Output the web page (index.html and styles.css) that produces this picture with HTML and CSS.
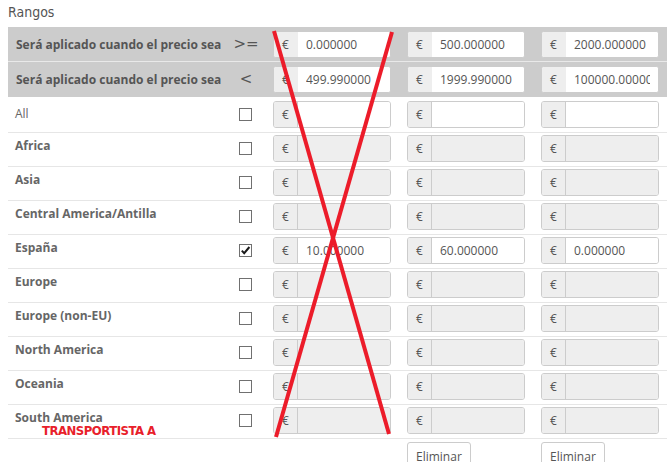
FILE: index.html
```html
<!DOCTYPE html>
<html lang="es">
<head>
<meta charset="utf-8">
<title>Rangos</title>
<link rel="stylesheet" href="styles.css">
</head>
<body>
<div class="page">
  <div class="title">Rangos</div>
  <div class="table">
    <div class="row head first">
      <div class="label">Será aplicado cuando el precio sea</div>
      <div class="op sym">&gt;=</div>
      <div class="price"><div class="ig"><span class="addon">€</span><input class="fi" value="0.000000"></div></div>
      <div class="price"><div class="ig"><span class="addon">€</span><input class="fi" value="500.000000"></div></div>
      <div class="price"><div class="ig"><span class="addon">€</span><input class="fi" value="2000.000000"></div></div>
    </div>
    <div class="row head second">
      <div class="label">Será aplicado cuando el precio sea</div>
      <div class="op sym">&lt;</div>
      <div class="price"><div class="ig"><span class="addon">€</span><input class="fi" value="499.990000"></div></div>
      <div class="price"><div class="ig"><span class="addon">€</span><input class="fi" value="1999.990000"></div></div>
      <div class="price"><div class="ig"><span class="addon">€</span><input class="fi" value="100000.000000"></div></div>
    </div>

    <div class="row body all">
      <div class="label plain">All</div>
      <div class="op"><span class="cb"></span></div>
      <div class="price"><div class="ig"><span class="addon">€</span><input class="fi"></div></div>
      <div class="price"><div class="ig"><span class="addon">€</span><input class="fi"></div></div>
      <div class="price"><div class="ig"><span class="addon">€</span><input class="fi"></div></div>
    </div>
    <div class="row body">
      <div class="label">Africa</div>
      <div class="op"><span class="cb"></span></div>
      <div class="price"><div class="ig off"><span class="addon">€</span><input class="fi" disabled></div></div>
      <div class="price"><div class="ig off"><span class="addon">€</span><input class="fi" disabled></div></div>
      <div class="price"><div class="ig off"><span class="addon">€</span><input class="fi" disabled></div></div>
    </div>
    <div class="row body">
      <div class="label">Asia</div>
      <div class="op"><span class="cb"></span></div>
      <div class="price"><div class="ig off"><span class="addon">€</span><input class="fi" disabled></div></div>
      <div class="price"><div class="ig off"><span class="addon">€</span><input class="fi" disabled></div></div>
      <div class="price"><div class="ig off"><span class="addon">€</span><input class="fi" disabled></div></div>
    </div>
    <div class="row body">
      <div class="label">Central America/Antilla</div>
      <div class="op"><span class="cb"></span></div>
      <div class="price"><div class="ig off"><span class="addon">€</span><input class="fi" disabled></div></div>
      <div class="price"><div class="ig off"><span class="addon">€</span><input class="fi" disabled></div></div>
      <div class="price"><div class="ig off"><span class="addon">€</span><input class="fi" disabled></div></div>
    </div>
    <div class="row body">
      <div class="label">España</div>
      <div class="op"><span class="cb checked"><svg width="11" height="11" viewBox="0 0 11 11"><polyline points="1.8,5.6 4.2,8.2 9.4,2" fill="none" stroke="#1a1a1a" stroke-width="2"/></svg></span></div>
      <div class="price"><div class="ig"><span class="addon">€</span><input class="fi" value="10.000000"></div></div>
      <div class="price"><div class="ig"><span class="addon">€</span><input class="fi" value="60.000000"></div></div>
      <div class="price"><div class="ig"><span class="addon">€</span><input class="fi" value="0.000000"></div></div>
    </div>
    <div class="row body">
      <div class="label">Europe</div>
      <div class="op"><span class="cb"></span></div>
      <div class="price"><div class="ig off"><span class="addon">€</span><input class="fi" disabled></div></div>
      <div class="price"><div class="ig off"><span class="addon">€</span><input class="fi" disabled></div></div>
      <div class="price"><div class="ig off"><span class="addon">€</span><input class="fi" disabled></div></div>
    </div>
    <div class="row body">
      <div class="label">Europe (non-EU)</div>
      <div class="op"><span class="cb"></span></div>
      <div class="price"><div class="ig off"><span class="addon">€</span><input class="fi" disabled></div></div>
      <div class="price"><div class="ig off"><span class="addon">€</span><input class="fi" disabled></div></div>
      <div class="price"><div class="ig off"><span class="addon">€</span><input class="fi" disabled></div></div>
    </div>
    <div class="row body">
      <div class="label">North America</div>
      <div class="op"><span class="cb"></span></div>
      <div class="price"><div class="ig off"><span class="addon">€</span><input class="fi" disabled></div></div>
      <div class="price"><div class="ig off"><span class="addon">€</span><input class="fi" disabled></div></div>
      <div class="price"><div class="ig off"><span class="addon">€</span><input class="fi" disabled></div></div>
    </div>
    <div class="row body">
      <div class="label">Oceania</div>
      <div class="op"><span class="cb"></span></div>
      <div class="price"><div class="ig off"><span class="addon">€</span><input class="fi" disabled></div></div>
      <div class="price"><div class="ig off"><span class="addon">€</span><input class="fi" disabled></div></div>
      <div class="price"><div class="ig off"><span class="addon">€</span><input class="fi" disabled></div></div>
    </div>
    <div class="row body">
      <div class="label">South America</div>
      <div class="op"><span class="cb"></span></div>
      <div class="price"><div class="ig off"><span class="addon">€</span><input class="fi" disabled></div></div>
      <div class="price"><div class="ig off"><span class="addon">€</span><input class="fi" disabled></div></div>
      <div class="price"><div class="ig off"><span class="addon">€</span><input class="fi" disabled></div></div>
    </div>
    <div class="row actions">
      <div></div>
      <div></div>
      <div class="price"></div>
      <div class="price"><button class="btn">Eliminar</button></div>
      <div class="price"><button class="btn">Eliminar</button></div>
    </div>
  </div>

  <div class="note">TRANSPORTISTA A</div>
  <svg class="cross" width="670" height="462" viewBox="0 0 670 462">
    <line x1="274" y1="31" x2="389" y2="434" stroke="#ec1c2a" stroke-width="4"/>
    <line x1="392" y1="32" x2="276" y2="437" stroke="#ec1c2a" stroke-width="4"/>
  </svg>
</div>
</body>
</html>
```

FILE: styles.css
```css
* { box-sizing: border-box; }

html, body {
  margin: 0;
  padding: 0;
  background: #fff;
}

body {
  font-family: "Open Sans", "Liberation Sans", sans-serif;
  font-size: 12px;
  color: #555;
  overflow: hidden;
}

.page {
  position: relative;
  width: 670px;
  height: 462px;
  padding: 0 8px;
}

.title {
  font-family: "Liberation Sans Narrow", "DejaVu Sans Condensed", sans-serif;
  font-size: 14px;
  color: #555;
  height: 27px;
  line-height: 22px;
  padding-top: 1px;
}

.table {
  width: 659px;
}

.row {
  display: grid;
  grid-template-columns: 225px 32px 134px 134px 134px;
  align-items: center;
}

.head {
  background: #cccccc;
}

.head.first {
  height: 35px;
  border-bottom: 1px solid #e9e9e9;
}

.head.second {
  height: 35px;
}

.head .label {
  font-weight: 700;
  padding-left: 8px;
  color: #555;
}

.op {
  display: flex;
  justify-content: center;
  padding-right: 7px;
  line-height: 1;
  color: #555;
}

.op.sym {
  font-family: "DejaVu Sans", sans-serif;
  font-size: 15px;
  padding-right: 6px;
}

.body {
  height: 34px;
  border-bottom: 1px solid #e6e6e6;
  padding-bottom: 2px;
}

.body.all {
  height: 36px;
  padding-bottom: 0;
}

.body .label {
  align-self: start;
  padding-left: 7px;
  padding-top: 4px;
  font-weight: 700;
  color: #666;
  line-height: 17px;
}

.body .label.plain {
  font-weight: 400;
  padding-top: 8px;
}

.price {
  padding: 0 8px;
}

.ig {
  display: flex;
  height: 27px;
  border: 1px solid #ccc;
  border-radius: 3px;
  overflow: hidden;
  background: #fff;
}

.addon {
  width: 24px;
  flex: none;
  display: flex;
  align-items: center;
  justify-content: center;
  background: #eeeeee;
  border-right: 1px solid #ccc;
  color: #555;
  font-size: 12px;
}

.head .addon {
  border-right-color: #eee;
}

.fi {
  flex: 1;
  min-width: 0;
  border: 0;
  padding: 0 8px;
  margin: 0;
  font-family: inherit;
  font-size: 12px;
  color: #555;
  background: #fff;
  outline: none;
}

.ig.off .fi {
  background: #eeeeee;
}

.cb {
  display: block;
  width: 13px;
  height: 13px;
  border: 1px solid #707070;
  background: #fff;
}

.cb svg {
  display: block;
}

.actions {
  padding-top: 3px;
  align-items: start;
}

.btn {
  font-family: inherit;
  font-size: 12px;
  color: #555;
  background: #fff;
  border: 1px solid #ccc;
  border-radius: 3px;
  height: 30px;
  padding: 0 8px;
  line-height: 28px;
}

.note {
  position: absolute;
  left: 42px;
  top: 423px;
  font-family: "Liberation Sans Narrow", "DejaVu Sans Condensed", sans-serif;
  font-weight: 700;
  font-size: 13px;
  letter-spacing: -0.5px;
  line-height: 16px;
  color: #e8202a;
}

.cross {
  position: absolute;
  left: 0;
  top: 0;
  pointer-events: none;
}
```
